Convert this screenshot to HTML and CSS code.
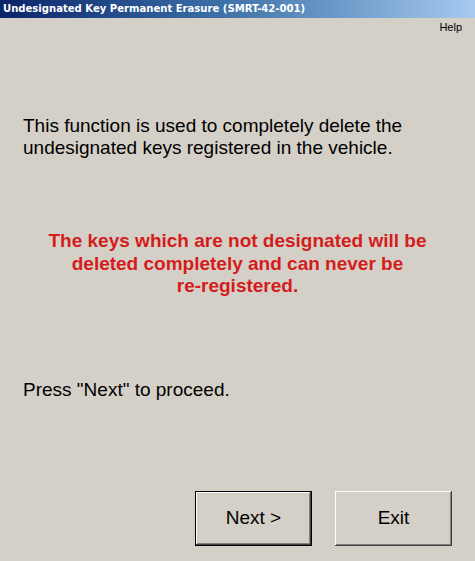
FILE: index.html
```html
<!DOCTYPE html>
<html>
<head>
<meta charset="utf-8">
<link rel="stylesheet" href="styles.css">
</head>
<body>
<div class="window">
  <div class="titlebar">Undesignated Key Permanent Erasure (SMRT-42-001)</div>
  <div class="menubar"><span class="help">Help</span></div>
  <div class="content">
    <p class="intro">This function is used to completely delete the<br>undesignated keys registered in the vehicle.</p>
    <p class="warning">The keys which are not designated will be<br>deleted completely and can never be<br>re-registered.</p>
    <p class="prompt">Press "Next" to proceed.</p>
  </div>
  <div class="buttons">
    <button class="btn default">Next &gt;</button>
    <button class="btn">Exit</button>
  </div>
</div>
</body>
</html>
```
FILE: styles.css
```css
html, body {
  margin: 0;
  padding: 0;
}
body {
  background: #d4d0c8;
  width: 475px;
  height: 561px;
  overflow: hidden;
}
.window {
  width: 475px;
  height: 561px;
  display: flex;
  flex-direction: column;
  background: #d4d0c8;
}
.titlebar {
  height: 18px;
  line-height: 17px;
  padding-left: 3px;
  background: linear-gradient(to right, #0a246a 0%, #3a6ea5 45%, #a6caf0 100%);
  color: #fff;
  font-family: "DejaVu Sans Condensed", "DejaVu Sans", sans-serif;
  font-weight: bold;
  font-size: 11.2px;
  white-space: nowrap;
}
.menubar {
  height: 18px;
  display: flex;
  justify-content: flex-end;
  align-items: center;
  padding-right: 13px;
  font-family: "Liberation Sans", Arial, sans-serif;
  font-size: 11px;
  color: #000;
}
.content {
  padding: 0 0 0 23px;
  font-family: "Liberation Sans", Arial, sans-serif;
  font-size: 19px;
  color: #000;
}
.content p {
  margin: 0;
}
.intro {
  padding-top: 79px;
  line-height: 22px;
}
.warning {
  margin-left: -23px !important;
  padding-top: 71px;
  text-align: center;
  color: #d41c1c;
  font-weight: bold;
  line-height: 22.5px;
}
.prompt {
  padding-top: 81px;
  line-height: 22px;
}
.buttons {
  display: flex;
  gap: 23px;
  padding-left: 195px;
  margin-top: 90px;
}
.btn {
  width: 117px;
  height: 55px;
  background: #d4d0c8;
  font-family: "Liberation Sans", Arial, sans-serif;
  font-size: 19px;
  color: #000;
  padding: 0;
  border: none;
  box-shadow: inset -1px -1px 0 #404040, inset 1px 1px 0 #ffffff, inset -2px -2px 0 #808080;
}
.btn.default {
  box-shadow: inset 0 0 0 1px #000, inset -2px -2px 0 #404040, inset 2px 2px 0 #ffffff, inset -3px -3px 0 #808080;
}
```
